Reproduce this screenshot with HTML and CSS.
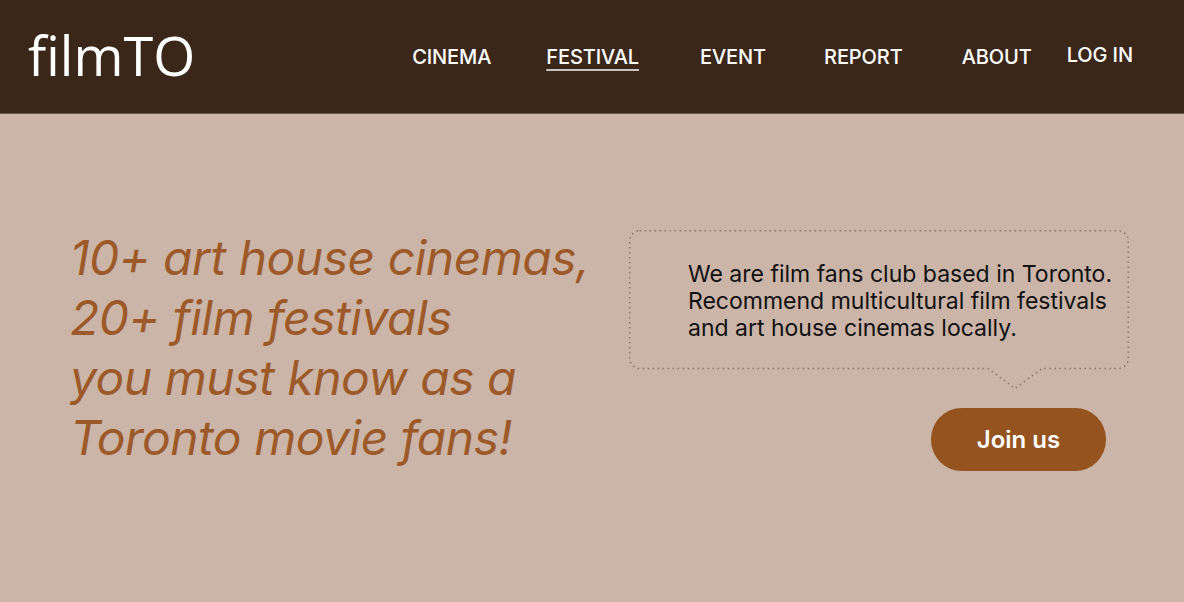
FILE: index.html
```html
<!DOCTYPE html>
<html lang="en">
<head>
<meta charset="utf-8">
<title>filmTO</title>
<link rel="stylesheet" href="styles.css">
</head>
<body>
<header class="topbar">
  <a class="logo" href="#">filmTO</a>
  <nav class="nav">
    <a class="nav-link" href="#">CINEMA</a>
    <a class="nav-link active" href="#">FESTIVAL</a>
    <a class="nav-link event" href="#">EVENT</a>
    <a class="nav-link report" href="#">REPORT</a>
    <a class="nav-link about" href="#">ABOUT</a>
    <a class="nav-link login" href="#">LOG IN</a>
  </nav>
</header>
<main class="hero">
  <h1 class="headline">10+ art house cinemas,<br>20+ film festivals<br>you must know as a<br>Toronto movie fans!</h1>
  <div class="side">
    <div class="bubble">
      <svg class="bubble-outline" width="500" height="160" viewBox="0 0 500 160" aria-hidden="true">
        <path d="M10.5 0.75 H489.5 A10 10 0 0 1 499.25 10.5 V128.5 A10 10 0 0 1 489.5 138.5 H413 L386 158.5 L359 138.5 H10.5 A10 10 0 0 1 0.75 128.5 V10.5 A10 10 0 0 1 10.5 0.75 Z" fill="none" stroke="#8d7b70" stroke-width="1.6" stroke-dasharray="1.6 3.4"/>
      </svg>
      <p class="bubble-text">We are film fans club based in Toronto.<br>Recommend multicultural film festivals<br>and art house cinemas locally.</p>
    </div>
    <a class="join" href="#">Join us</a>
  </div>
</main>
</body>
</html>
```

FILE: styles.css
```css
* { box-sizing: border-box; }
html, body { margin: 0; padding: 0; }
body {
  background: #cbb5a8;
  font-family: "Inter", "Liberation Sans", sans-serif;
  min-height: 602px;
}
a { text-decoration: none; color: inherit; }

.topbar {
  height: 114px;
  background: #3b271a;
  display: flex;
  align-items: center;
  padding: 0 51px 0 28px;
  border-bottom: 1px solid #6b5a4e;
}
.logo {
  font-family: "Open Sans", "Noto Sans", sans-serif;
  font-size: 54px;
  font-weight: 400;
  color: #ffffff;
  line-height: 1;
  margin-top: -4px;
}
.nav {
  margin-left: auto;
  display: flex;
  align-items: center;
  gap: 55px;
}
.nav-link {
  color: #ffffff;
  font-size: 20px;
  font-weight: 500;
  letter-spacing: -0.1px;
  line-height: 24px;
}
.nav-link.active {
  text-decoration: underline;
  text-decoration-color: #c9c4c0;
  text-decoration-thickness: 2px;
  text-underline-offset: 5px;
}
.nav-link.event { margin-left: 6px; }
.nav-link.report { margin-left: 3px; }
.nav-link.about { margin-left: 4px; }
.nav-link.login {
  margin-left: -20px;
  margin-top: -4px;
}

.hero {
  display: flex;
  align-items: flex-start;
  padding: 114px 56px 0 70px;
}
.headline {
  margin: 0;
  width: 559px;
  font-size: 48px;
  line-height: 60px;
  font-style: italic;
  font-weight: 400;
  color: #9c5a2a;
  letter-spacing: -0.5px;
}
.side {
  display: flex;
  flex-direction: column;
  align-items: flex-end;
  margin-top: 2px;
  width: 499px;
}
.bubble {
  position: relative;
  width: 499px;
  height: 139px;
  padding: 31px 6px 0 59px;
}
.bubble-outline {
  position: absolute;
  left: 0;
  top: 0;
  overflow: visible;
}
.bubble-text {
  position: relative;
  margin: 0;
  font-size: 23px;
  line-height: 27px;
  color: #111111;
  white-space: nowrap;
}
.join {
  margin-top: 39px;
  margin-right: 22px;
  width: 175px;
  height: 63px;
  border-radius: 31px;
  background: #95531f;
  color: #ffffff;
  font-size: 24px;
  font-weight: 600;
  display: flex;
  align-items: center;
  justify-content: center;
}
```
